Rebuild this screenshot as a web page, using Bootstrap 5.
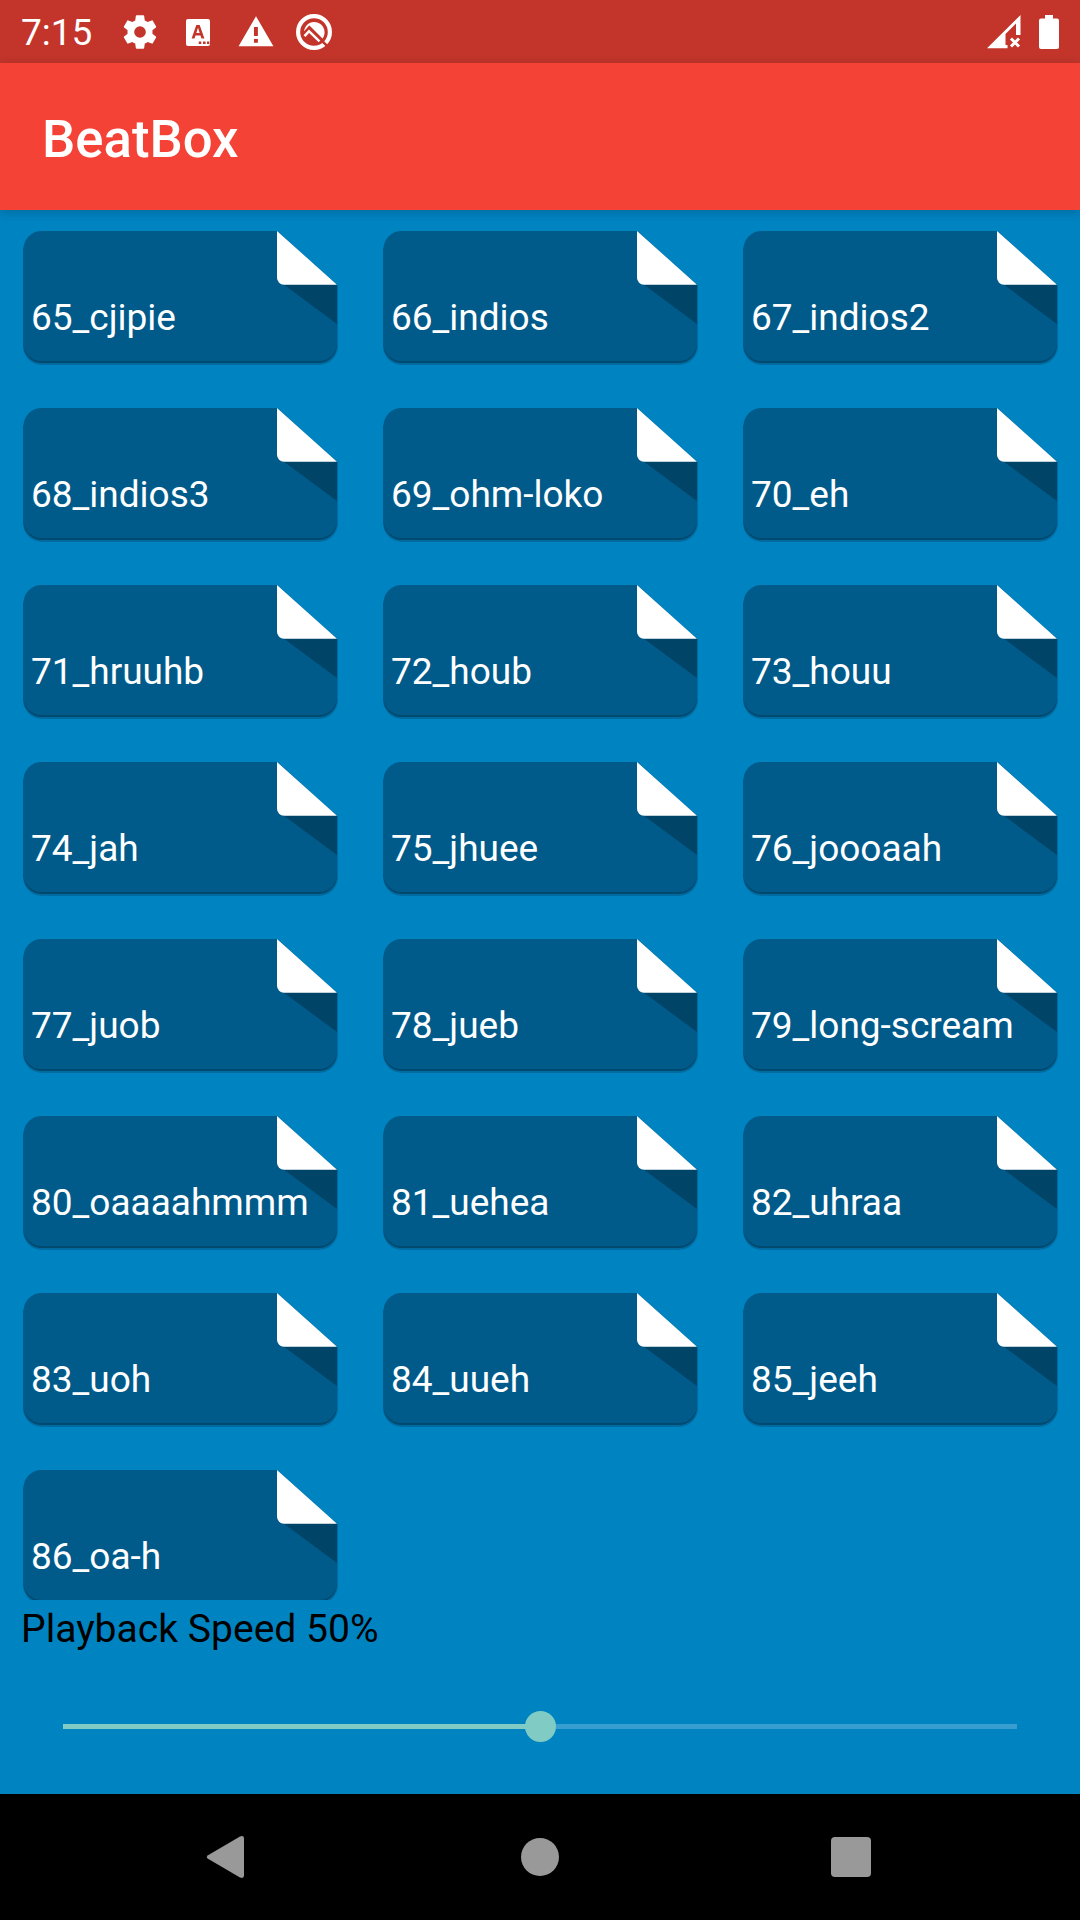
<!DOCTYPE html>
<html lang="en">
<head>
<meta charset="utf-8">
<meta name="viewport" content="width=device-width, initial-scale=1">
<title>BeatBox</title>
<link href="https://cdn.jsdelivr.net/npm/bootstrap@5.3.0/dist/css/bootstrap.min.css" rel="stylesheet">
<style>
  body { background: #0083c1; font-family: Roboto, "Noto Sans", sans-serif; font-size: 37px; line-height: 43px; }
  .screen { width: 1080px; height: 1920px; }
  .statusbar { height: 63px; background: #c3352b; padding-left: 21px; padding-right: 20px; }
  .statusbar svg { display: block; fill: #fff; }
  .clock { width: 99px; padding-top: 1px; }
  .warn-icon { margin-left: 25px; }
  .q-icon { margin-left: 20px; }
  .sys-icons { gap: 17px; }
  .appbar { height: 147px; background: #f44336; padding: 0 42px; box-shadow: 0 2px 10px rgba(0,0,0,.2); z-index: 1; }
  .app-title { font-size: 52.7px; line-height: 62px; font-weight: 500; padding-top: 4px; }
  .sound-list { height: 1390px; padding-top: 21px; }
  .sound { height: 177px; padding: 65px 0 0 31px; color: #fff; white-space: nowrap; }
  .sound svg { top: 0; left: 20px; }
  .sound span { position: relative; }
  .controls { height: 194px; }
  .speed-label { padding: 8px 21px 0; color: #000; font-size: 39.1px; }
  .speed { display: block; width: 954px; height: 31px; margin: 60px auto 0; }
  .speed::-webkit-slider-runnable-track { height: 5px; border-radius: 0; background: linear-gradient(to right, #80cbc4 50%, #389dcf 50%); }
  .speed::-webkit-slider-thumb { width: 31px; height: 31px; margin-top: -13px; background: #80cbc4; border-radius: 50%; }
  .navkeys { height: 126px; background: #000; }
  .navkeys svg { display: block; fill: #999; }
  .navkeys .btn { width: 311px; }
  .navkeys .back-key { padding-right: 8px !important; }
</style>
</head>
<body>
<svg class="d-none" xmlns="http://www.w3.org/2000/svg">
  <symbol id="tile" viewBox="0 0 320 140">
    <path d="M21 3H257L318 54V115a19 19 0 0 1-19 19H22a19 19 0 0 1-19-19V21a18 18 0 0 1 18-18z" fill="#00496f" opacity=".4"/>
    <path d="M21 2H257L317 54V114a18 18 0 0 1-18 18H21.500A18 18 0 0 1 3.500 114V18z" fill="#004a70"/>
    <path d="M21.500 0H257.500L317 54V112a18 18 0 0 1-18 18H21.500a18 18 0 0 1-18-18V18a18 18 0 0 1 18-18z" fill="#005b8b"/>
    <path d="M263 53H317V93z" fill="#004468"/>
    <path d="M257 0L317 53.700H264a7 7 0 0 1-7-7z" fill="#fff"/>
  </symbol>
</svg>
<div class="screen d-flex flex-column overflow-hidden">
  <div class="statusbar d-flex align-items-center text-white flex-shrink-0">
    <span class="clock">7:15</span>
    <svg width="40" height="40" viewBox="0 0 24 24"><path d="M19.430 12.980c.04-.32.07-.64.07-.98s-.03-.66-.07-.98l2.110-1.650c.19-.15.24-.42.12-.64l-2-3.460c-.12-.22-.39-.3-.61-.22l-2.490 1c-.52-.4-1.080-.73-1.690-.98l-.38-2.650A.488.488 0 0 0 14 2h-4c-.25 0-.46.18-.49.42l-.38 2.650c-.61.25-1.170.59-1.690.98l-2.490-1c-.23-.09-.49 0-.61.22l-2 3.460c-.13.22-.07.49.12.64l2.110 1.650c-.04.32-.07.65-.07.98s.03.66.07.98l-2.110 1.650c-.19.15-.24.42-.12.64l2 3.460c.12.22.39.3.61.22l2.490-1c.52.4 1.080.73 1.690.98l.38 2.650c.03.24.24.42.49.42h4c.25 0 .46-.18.49-.42l.38-2.650c.61-.25 1.170-.59 1.690-.98l2.490 1c.23.09.49 0 .61-.22l2-3.460c.12-.22.07-.49-.12-.64zM12 15.500A3.500 3.500 0 1 1 12 8.500a3.500 3.500 0 0 1 0 7z"/></svg>
    <svg class="ms-4" width="28" height="28" viewBox="0 0 28 28"><path fill-rule="evenodd" d="M4 1H24a2 2 0 0 1 2 2V26a2 2 0 0 1-2 2H4a2 2 0 0 1-2-2V3a2 2 0 0 1 2-2zM12.300 7L7.600 20.500H10.500L11.500 17.500H16.500L17.500 20.500H20.400L15.700 7zM12.300 15H15.700L14 9.800zM14.700 23.500V26H17.300V23.500zM19 23.500V26H21.600V23.500zM23 23.500V26H25.400V23.500z"/></svg>
    <svg class="warn-icon" width="38" height="38" viewBox="0 0 24 24"><path d="M1 21h22L12 2 1 21zm12.200-2.200h-2.500v-2.400h2.500v2.400zm0-4.300h-2.500V8.800h2.500v5.700z"/></svg>
    <svg class="q-icon" width="38" height="38" viewBox="0 0 38 38"><circle cx="19" cy="19" r="15.900" fill="none" stroke="#fff" stroke-width="4.200"/><path d="M9 18.500A10.300 10.300 0 1 1 27.500 25.500L14.500 12.500z"/><path d="M25 25L32 36" stroke="#c3352b" stroke-width="0"/><path d="M8 21.500L14 14.800L33.500 34.300" fill="none" stroke="#c3352b" stroke-width="2.600"/><path d="M9.500 23.200L14 18.200L24.500 28.400" fill="none" stroke="#fff" stroke-width="2.500"/></svg>
    <div class="sys-icons ms-auto d-flex">
      <svg width="34" height="36" viewBox="0 0 34 36"><path d="M0 34.300L33.500 1V21H29V9.500L18.500 20V31H20.500V34.300z"/><path d="M24 24.500l8 8M32 24.500l-8 8" stroke="#fff" stroke-width="3"/></svg>
      <svg width="22" height="36" viewBox="0 0 22 36"><path d="M7 1H15V4.500H19a2 2 0 0 1 2 2V33a2 2 0 0 1-2 2H3a2 2 0 0 1-2-2V6.500a2 2 0 0 1 2-2H7z"/></svg>
    </div>
  </div>
  <header class="appbar d-flex align-items-center position-relative text-white flex-shrink-0">
    <h1 class="app-title m-0">BeatBox</h1>
  </header>
  <main class="sound-list overflow-hidden flex-shrink-0">
    <div class="row g-0">
      <div class="col-4 sound position-relative"><svg class="position-absolute" width="320" height="140"><use href="#tile"/></svg><span>65_cjipie</span></div>
      <div class="col-4 sound position-relative"><svg class="position-absolute" width="320" height="140"><use href="#tile"/></svg><span>66_indios</span></div>
      <div class="col-4 sound position-relative"><svg class="position-absolute" width="320" height="140"><use href="#tile"/></svg><span>67_indios2</span></div>
      <div class="col-4 sound position-relative"><svg class="position-absolute" width="320" height="140"><use href="#tile"/></svg><span>68_indios3</span></div>
      <div class="col-4 sound position-relative"><svg class="position-absolute" width="320" height="140"><use href="#tile"/></svg><span>69_ohm-loko</span></div>
      <div class="col-4 sound position-relative"><svg class="position-absolute" width="320" height="140"><use href="#tile"/></svg><span>70_eh</span></div>
      <div class="col-4 sound position-relative"><svg class="position-absolute" width="320" height="140"><use href="#tile"/></svg><span>71_hruuhb</span></div>
      <div class="col-4 sound position-relative"><svg class="position-absolute" width="320" height="140"><use href="#tile"/></svg><span>72_houb</span></div>
      <div class="col-4 sound position-relative"><svg class="position-absolute" width="320" height="140"><use href="#tile"/></svg><span>73_houu</span></div>
      <div class="col-4 sound position-relative"><svg class="position-absolute" width="320" height="140"><use href="#tile"/></svg><span>74_jah</span></div>
      <div class="col-4 sound position-relative"><svg class="position-absolute" width="320" height="140"><use href="#tile"/></svg><span>75_jhuee</span></div>
      <div class="col-4 sound position-relative"><svg class="position-absolute" width="320" height="140"><use href="#tile"/></svg><span>76_joooaah</span></div>
      <div class="col-4 sound position-relative"><svg class="position-absolute" width="320" height="140"><use href="#tile"/></svg><span>77_juob</span></div>
      <div class="col-4 sound position-relative"><svg class="position-absolute" width="320" height="140"><use href="#tile"/></svg><span>78_jueb</span></div>
      <div class="col-4 sound position-relative"><svg class="position-absolute" width="320" height="140"><use href="#tile"/></svg><span>79_long-scream</span></div>
      <div class="col-4 sound position-relative"><svg class="position-absolute" width="320" height="140"><use href="#tile"/></svg><span>80_oaaaahmmm</span></div>
      <div class="col-4 sound position-relative"><svg class="position-absolute" width="320" height="140"><use href="#tile"/></svg><span>81_uehea</span></div>
      <div class="col-4 sound position-relative"><svg class="position-absolute" width="320" height="140"><use href="#tile"/></svg><span>82_uhraa</span></div>
      <div class="col-4 sound position-relative"><svg class="position-absolute" width="320" height="140"><use href="#tile"/></svg><span>83_uoh</span></div>
      <div class="col-4 sound position-relative"><svg class="position-absolute" width="320" height="140"><use href="#tile"/></svg><span>84_uueh</span></div>
      <div class="col-4 sound position-relative"><svg class="position-absolute" width="320" height="140"><use href="#tile"/></svg><span>85_jeeh</span></div>
      <div class="col-4 sound position-relative"><svg class="position-absolute" width="320" height="140"><use href="#tile"/></svg><span>86_oa-h</span></div>
    </div>
  </main>
  <section class="controls flex-shrink-0">
    <label class="speed-label d-block" for="speed">Playback Speed 50%</label>
    <input class="form-range speed" type="range" id="speed" min="0" max="100" value="50">
  </section>
  <nav class="navkeys d-flex align-items-center justify-content-center flex-shrink-0">
    <button class="btn border-0 p-0 d-flex justify-content-center back-key" aria-label="Back"><svg width="44" height="44" viewBox="0 0 44 44"><path d="M5 20.200L37 1.500Q41 0 41 3.500V40.500Q41 44 37 42.500L5 23.800Q2.500 22 5 20.200z"/></svg></button>
    <button class="btn border-0 p-0 d-flex justify-content-center" aria-label="Home"><svg width="40" height="40" viewBox="0 0 40 40"><circle cx="20" cy="20" r="19"/></svg></button>
    <button class="btn border-0 p-0 d-flex justify-content-center" aria-label="Overview"><svg width="40" height="40" viewBox="0 0 40 40"><rect width="40" height="40" rx="4"/></svg></button>
  </nav>
</div>
<script src="https://cdn.jsdelivr.net/npm/bootstrap@5.3.0/dist/js/bootstrap.bundle.min.js"></script>
</body>
</html>
